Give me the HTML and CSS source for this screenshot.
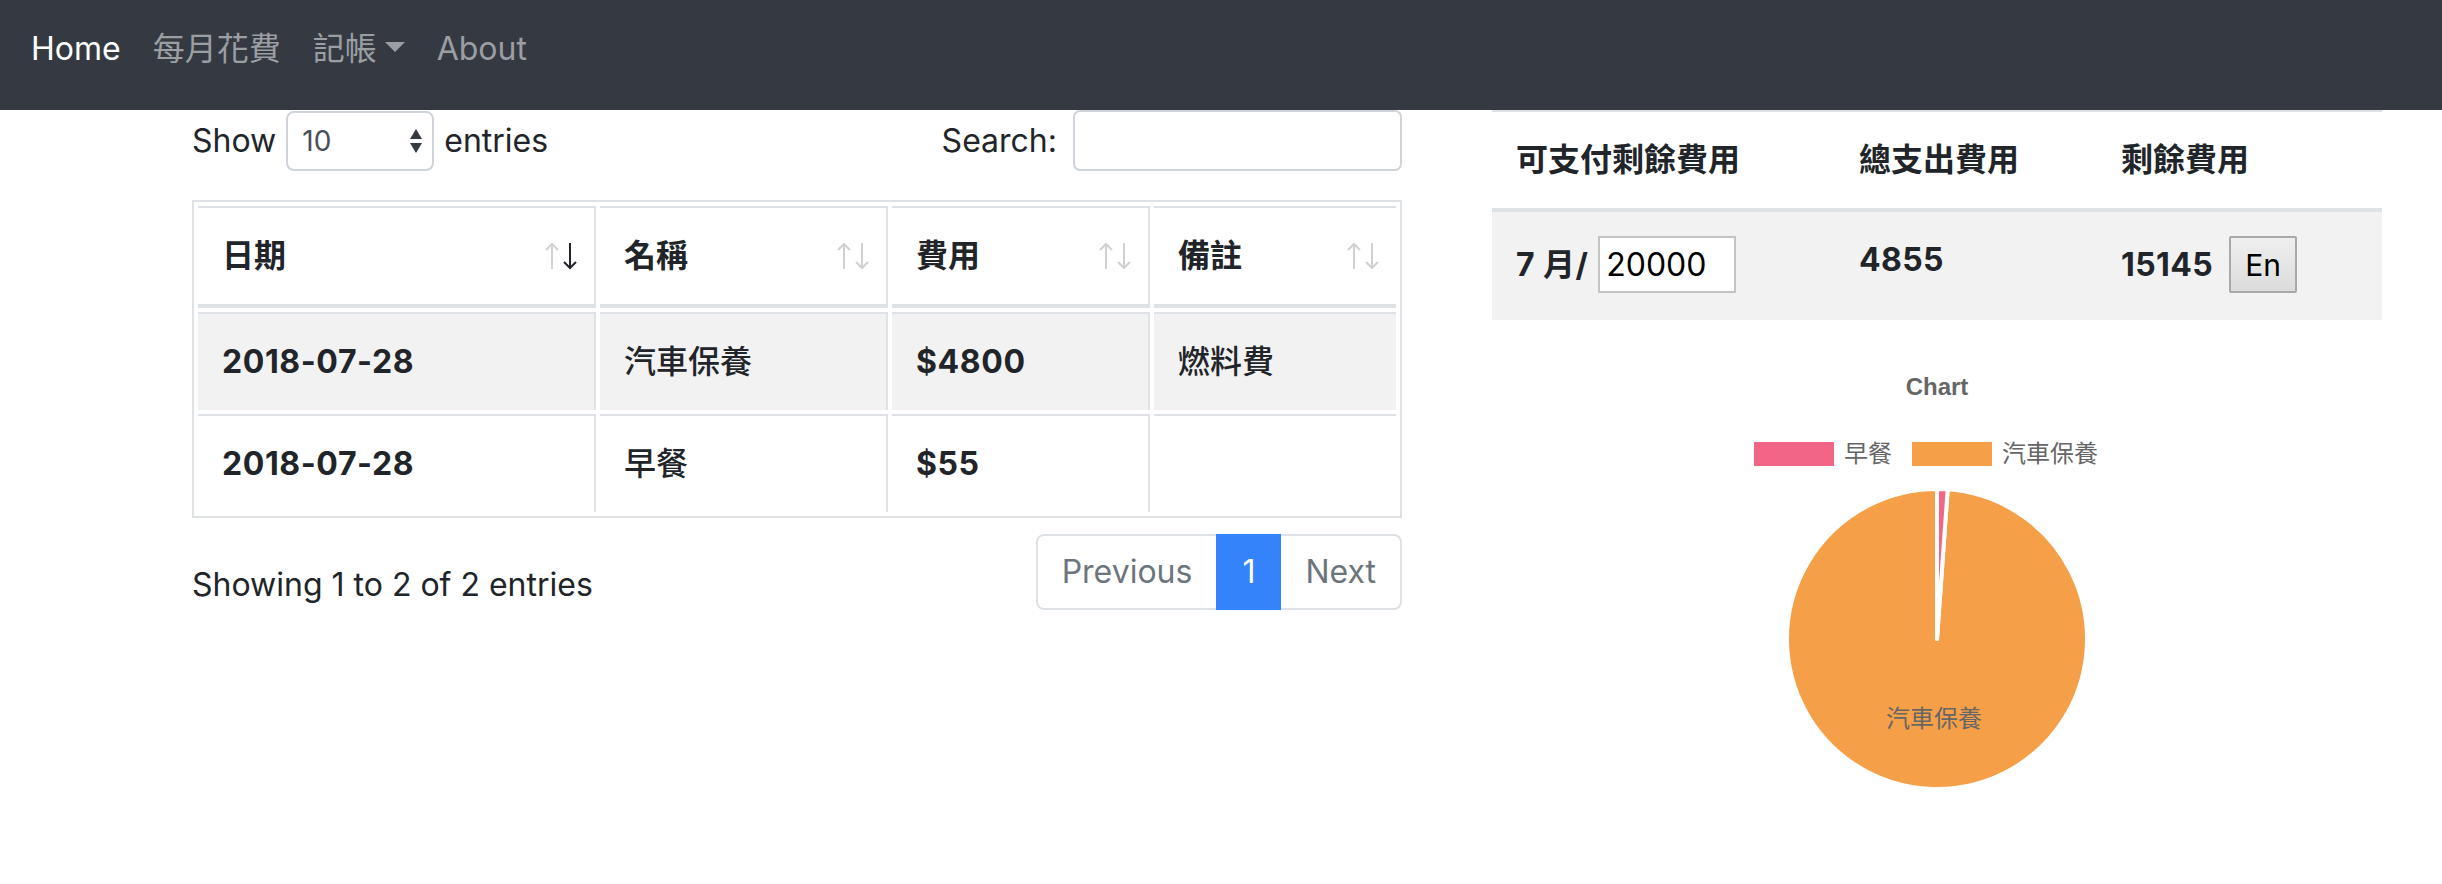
FILE: index.html
```html
<!DOCTYPE html>
<html lang="zh-Hant">
<head>
<meta charset="utf-8">
<title>每月花費</title>
<link rel="stylesheet" href="styles.css">
</head>
<body>
<nav class="navbar">
  <a class="nav-link active" href="#">Home</a>
  <a class="nav-link" href="#">每月花費</a>
  <a class="nav-link" href="#">記帳<span class="caret"></span></a>
  <a class="nav-link" href="#">About</a>
</nav>
<main class="page">
  <section class="left">
    <div class="dt-top">
      <div class="dt-length">
        <span>Show</span>
        <span class="select">10
          <svg class="select-arrows" width="12" height="24" viewBox="0 0 12 24"><path d="M6 0 L12 10 L0 10 Z M0 14 L12 14 L6 24 Z" fill="#343a40"/></svg>
        </span>
        <span>entries</span>
      </div>
      <div class="dt-filter">
        <span>Search:</span>
        <input class="search" type="search" aria-label="Search">
      </div>
    </div>
    <table class="dt">
      <thead>
        <tr>
          <th class="c1"><div class="th-in"><span>日期</span><svg class="sort desc" width="32" height="28" viewBox="0 0 32 28"><path class="up" d="M7 27 V2 M1 8 L7 2 L13 8"/><path class="down" d="M25 1 V26 M19 20 L25 26 L31 20"/></svg></div></th>
          <th class="c2"><div class="th-in"><span>名稱</span><svg class="sort" width="32" height="28" viewBox="0 0 32 28"><path class="up" d="M7 27 V2 M1 8 L7 2 L13 8"/><path class="down" d="M25 1 V26 M19 20 L25 26 L31 20"/></svg></div></th>
          <th class="c3"><div class="th-in"><span>費用</span><svg class="sort" width="32" height="28" viewBox="0 0 32 28"><path class="up" d="M7 27 V2 M1 8 L7 2 L13 8"/><path class="down" d="M25 1 V26 M19 20 L25 26 L31 20"/></svg></div></th>
          <th class="c4"><div class="th-in"><span>備註</span><svg class="sort" width="32" height="28" viewBox="0 0 32 28"><path class="up" d="M7 27 V2 M1 8 L7 2 L13 8"/><path class="down" d="M25 1 V26 M19 20 L25 26 L31 20"/></svg></div></th>
        </tr>
      </thead>
      <tbody>
        <tr class="odd">
          <td class="strong">2018-07-28</td>
          <td class="cjk">汽車保養</td>
          <td class="strong">$4800</td>
          <td class="cjk">燃料費</td>
        </tr>
        <tr>
          <td class="strong">2018-07-28</td>
          <td class="cjk">早餐</td>
          <td class="strong">$55</td>
          <td class="cjk"></td>
        </tr>
      </tbody>
    </table>
    <div class="dt-bottom">
      <div class="info">Showing 1 to 2 of 2 entries</div>
      <ul class="pagination">
        <li class="page-item"><span class="page-link first">Previous</span></li>
        <li class="page-item"><span class="page-link active">1</span></li>
        <li class="page-item"><span class="page-link last">Next</span></li>
      </ul>
    </div>
  </section>
  <section class="right">
    <table class="summary">
      <thead>
        <tr>
          <th class="s1">可支付剩餘費用</th>
          <th class="s2">總支出費用</th>
          <th class="s3">剩餘費用</th>
        </tr>
      </thead>
      <tbody>
        <tr>
          <td>7 月/ <input class="budget" type="text" value="20000" aria-label="budget"></td>
          <td>4855</td>
          <td>15145 <button class="en-btn" type="button">En</button></td>
        </tr>
      </tbody>
    </table>
    <div class="chart">
      <div class="chart-title">Chart</div>
      <div class="legend">
        <div class="legend-item"><span class="swatch pink"></span><span>早餐</span></div>
        <div class="legend-item"><span class="swatch orange"></span><span>汽車保養</span></div>
      </div>
      <svg class="pie" width="304" height="304" viewBox="0 0 304 304">
        <path d="M152 152 L162.67 2.38 A150 150 0 1 1 152 2 Z" fill="#f5a048" stroke="#fff" stroke-width="4" stroke-linejoin="round"/>
        <path d="M152 152 L152 2 A150 150 0 0 1 162.67 2.38 Z" fill="#f26586" stroke="#fff" stroke-width="4" stroke-linejoin="round"/>
        <text x="149" y="229" text-anchor="middle" dominant-baseline="central" class="pie-label">汽車保養</text>
      </svg>
    </div>
  </section>
</main>
</body>
</html>
```
FILE: styles.css
```css
* {
  box-sizing: border-box;
}

body {
  margin: 0;
  font-family: "Inter", "Noto Sans CJK TC", sans-serif;
  font-size: 32px;
  line-height: 48px;
  color: #212529;
  background: #fff;
}

/* ---------- navbar ---------- */
.navbar {
  display: flex;
  align-items: flex-start;
  height: 110px;
  padding: 25px 15px 0;
  background: #353a42;
}

.nav-link {
  padding: 0 16px;
  color: #9b9ea2;
  text-decoration: none;
  line-height: 48px;
  white-space: nowrap;
}

.nav-link.active {
  color: #fff;
}

.caret {
  display: inline-block;
  margin-left: 8px;
  vertical-align: 8px;
  border-top: 10px solid #9b9ea2;
  border-left: 10px solid transparent;
  border-right: 10px solid transparent;
}

/* ---------- page ---------- */
.page {
  display: flex;
  align-items: flex-start;
  gap: 90px;
  padding-left: 192px;
}

.left {
  width: 1210px;
  flex: none;
}

.right {
  width: 890px;
  flex: none;
}

/* ---------- datatable controls ---------- */
.dt-top {
  display: flex;
  justify-content: space-between;
  align-items: center;
  height: 61px;
}

.dt-length,
.dt-filter {
  display: flex;
  align-items: center;
  white-space: nowrap;
}

.dt-length {
  gap: 10px;
}

.select {
  display: inline-flex;
  align-items: center;
  justify-content: space-between;
  width: 148px;
  height: 60px;
  padding: 0 10px 0 14px;
  border: 2px solid #ced4da;
  border-radius: 8px;
  font-size: 28px;
  color: #495057;
}

.search {
  width: 329px;
  height: 61px;
  margin-left: 16px;
  border: 2px solid #ced4da;
  border-radius: 7px;
  font: inherit;
  background: #fff;
}

/* ---------- table ---------- */
.dt {
  width: 1210px;
  margin-top: 29px;
  border: 2px solid #dee2e6;
  border-collapse: separate;
  border-spacing: 4px;
  table-layout: fixed;
}

.dt .c1 { width: 398px; }
.dt .c2 { width: 288px; }
.dt .c3 { width: 258px; }
.dt .c4 { width: 242px; }

.dt th {
  padding: 24px 17px 24px 24px;
  text-align: left;
  font-weight: 700;
  border-top: 2px solid #dee2e6;
  border-right: 2px solid #dee2e6;
  border-bottom: 4px solid #dee2e6;
}

.dt td {
  padding: 24px;
  border-top: 2px solid #dee2e6;
  border-right: 2px solid #dee2e6;
  white-space: nowrap;
}

.dt th:last-child,
.dt td:last-child {
  border-right: 0;
}

.dt tr.odd td {
  background: #f2f2f2;
}

.dt td.strong {
  font-weight: 700;
  letter-spacing: 0.6px;
}

.dt td.cjk {
  font-weight: 500;
}

.th-in {
  display: flex;
  justify-content: space-between;
  align-items: center;
}

.sort path {
  fill: none;
  stroke: #cfd1d3;
  stroke-width: 2;
}

.sort.desc .down {
  stroke: #212529;
}

/* ---------- bottom ---------- */
.dt-bottom {
  display: flex;
  justify-content: space-between;
  align-items: flex-start;
  margin-top: 16px;
}

.info {
  padding-top: 27px;
}

.pagination {
  display: flex;
  margin: 0;
  padding: 0;
  list-style: none;
}

.page-link {
  display: block;
  margin-left: -2px;
  padding: 16px 24px;
  line-height: 40px;
  border: 2px solid #dee2e6;
  color: #6c757d;
  background: #fff;
}

.page-link.first {
  margin-left: 0;
  border-radius: 8px 0 0 8px;
}

.page-link.last {
  border-radius: 0 8px 8px 0;
}

.page-link.active {
  position: relative;
  color: #fff;
  background: #3483fb;
  border-color: #3483fb;
}

/* ---------- summary ---------- */
.summary {
  width: 890px;
  border-collapse: collapse;
  table-layout: fixed;
}

.summary .s1 { width: 343px; }
.summary .s2 { width: 262px; }
.summary .s3 { width: 285px; }

.summary th {
  padding: 24px;
  text-align: left;
  vertical-align: bottom;
  font-weight: 700;
  border-top: 2px solid #dee2e6;
  border-bottom: 4px solid #dee2e6;
}

.summary td {
  padding: 24px 24px 27px;
  vertical-align: top;
  font-weight: 700;
  letter-spacing: 0.4px;
  white-space: nowrap;
  background: #f2f2f2;
  border-top: 2px solid #dee2e6;
}

.budget {
  width: 138px;
  height: 57px;
  margin-left: 2px;
  padding: 0 6px;
  border: 2px solid #c4c4c4;
  font-family: "Inter", sans-serif;
  font-size: 32px;
  font-weight: 400;
  letter-spacing: 0;
  color: #000;
  background: #fff;
}

.en-btn {
  width: 68px;
  height: 57px;
  margin-left: 8px;
  padding: 0;
  border: 2px solid #a9a9a9;
  border-radius: 2px;
  font-family: "Inter", sans-serif;
  font-size: 30px;
  font-weight: 400;
  letter-spacing: 0;
  color: #000;
  background: linear-gradient(#efefef, #dcdcdc);
}

/* ---------- chart ---------- */
.chart {
  display: flex;
  flex-direction: column;
  align-items: center;
  padding-top: 55px;
  color: #666;
  font-family: "Liberation Sans", "Noto Sans CJK TC", sans-serif;
}

.chart-title {
  font-size: 24px;
  line-height: 24px;
  font-weight: 700;
}

.legend {
  display: flex;
  gap: 20px;
  margin-top: 43px;
  padding-right: 22px;
  font-size: 24px;
  line-height: 24px;
}

.legend-item {
  display: flex;
  align-items: center;
  gap: 10px;
}

.swatch {
  width: 80px;
  height: 24px;
}

.swatch.pink {
  background: #f26586;
}

.swatch.orange {
  background: #f5a048;
}

.pie {
  display: block;
  margin-top: 21px;
}

.pie-label {
  font-family: "Noto Sans CJK TC", sans-serif;
  font-size: 24px;
  fill: #666;
}
```
